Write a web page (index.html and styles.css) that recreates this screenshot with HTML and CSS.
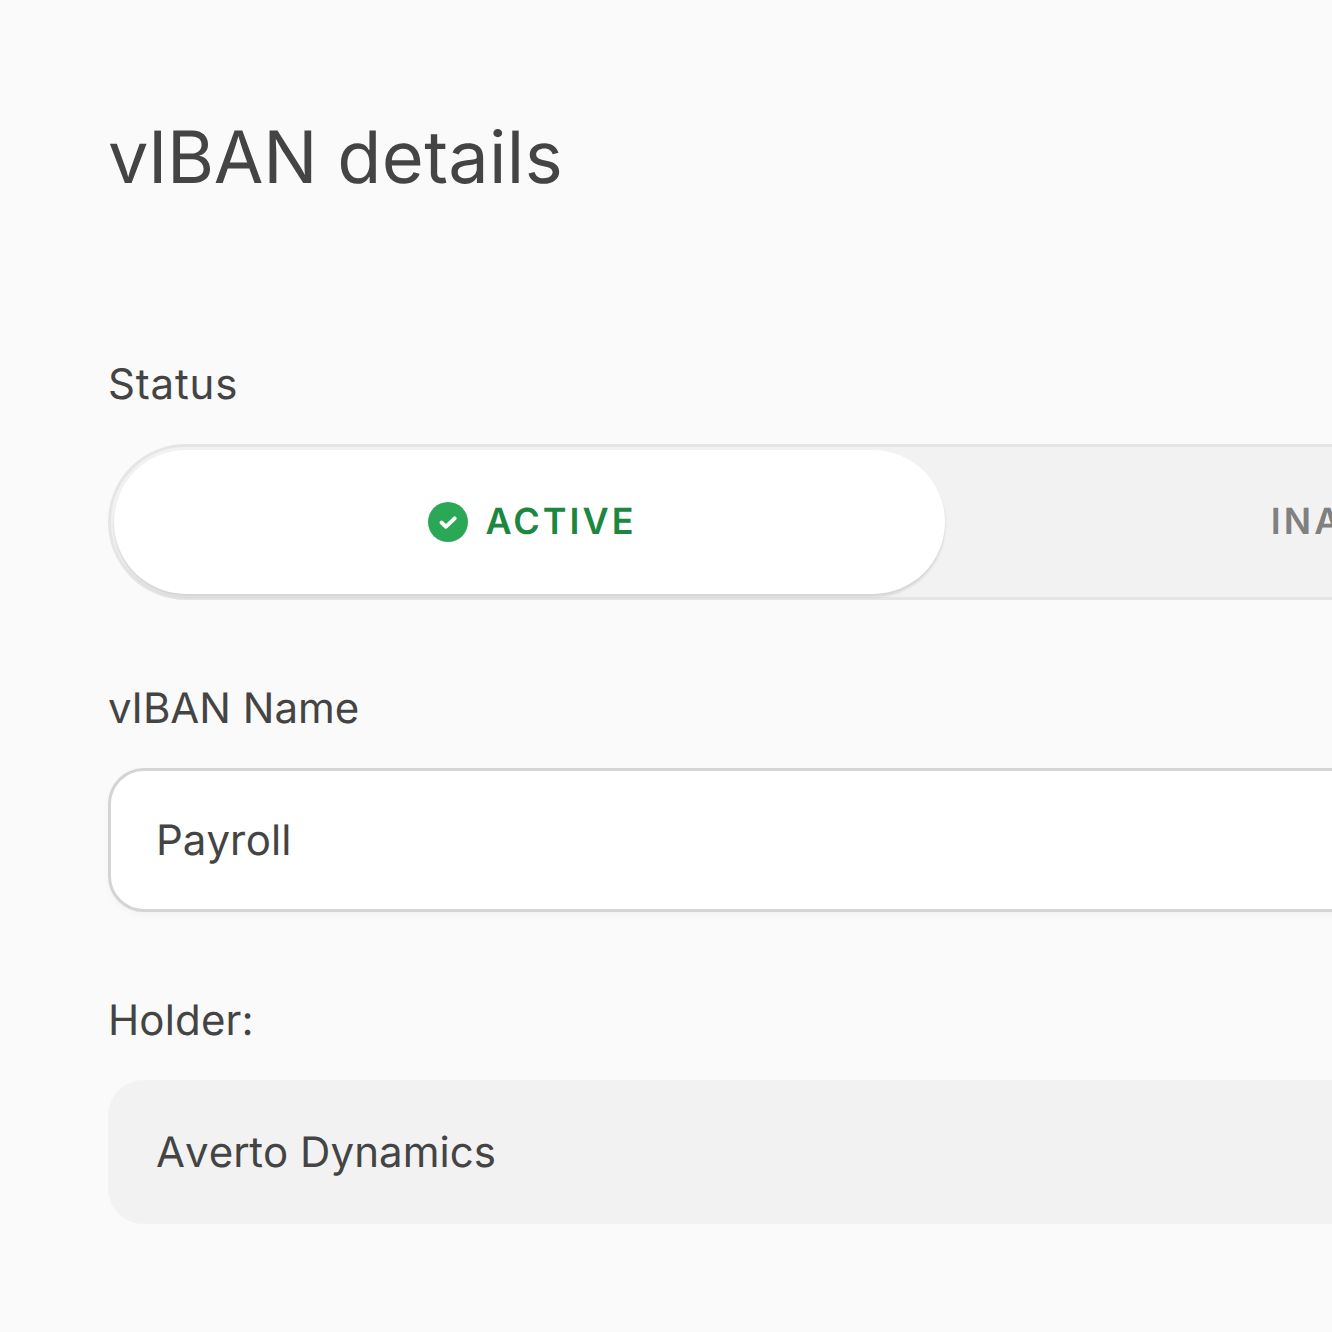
FILE: index.html
```html
<!DOCTYPE html>
<html lang="en">
<head>
<meta charset="utf-8">
<title>vIBAN details</title>
<link rel="stylesheet" href="styles.css">
</head>
<body>
<main class="page">
  <h1 class="title"><span class="title-lead">vIBAN</span> <span class="title-tail">details</span></h1>
  <section class="field field-status">
    <div class="label">Status</div>
    <div class="segmented">
      <div class="segment segment-active">
        <svg class="check" viewBox="0 0 40 40" aria-hidden="true">
          <circle cx="20" cy="20" r="20" fill="#2aa855"/>
          <path d="M13.5 20.5l4.5 4.2 8.7-8.4" fill="none" stroke="#fff" stroke-width="3.9" stroke-linecap="round" stroke-linejoin="round"/>
        </svg>
        <span class="segment-text">ACTIVE</span>
      </div>
      <div class="segment segment-inactive"><span class="segment-text">INACTIVE</span></div>
    </div>
  </section>
  <section class="field field-name">
    <div class="label">vIBAN Name</div>
    <div class="input">Payroll</div>
  </section>
  <section class="field field-holder">
    <div class="label">Holder:</div>
    <div class="input input-readonly">Averto Dynamics</div>
  </section>
</main>
</body>
</html>
```
FILE: styles.css
```css
* { box-sizing: border-box; }
html, body { margin: 0; height: 100%; }
body {
  background: #fafafa;
  overflow: hidden;
  font-family: Inter, "Noto Sans", sans-serif;
  color: #444;
  text-rendering: geometricPrecision;
  font-kerning: none;
}
.page {
  width: 1797px;
  padding: 110px 0 0 108px;
}
.title {
  margin: 0;
  font-size: 72px;
  line-height: 96px;
  font-weight: 400;
}
.title-lead { letter-spacing: -0.35px; }
.title-tail { letter-spacing: 0.4px; }
.field-status { margin-top: 148px; }
.field-name { margin-top: 78px; }
.field-holder { margin-top: 78px; }
.label {
  font-size: 42px;
  line-height: 62px;
  margin-bottom: 28px;
  font-weight: 400;
}
.field-status .label { letter-spacing: 0.9px; }
.field-holder .label { letter-spacing: 0.15px; }
.segmented {
  display: grid;
  grid-template-columns: 831px 1fr;
  height: 156px;
  padding: 3px;
  border: 3px solid #e5e5e5;
  border-radius: 78px;
  background: #f2f2f2;
}
.segment {
  display: flex;
  align-items: center;
  justify-content: center;
  gap: 17px;
  font-size: 36px;
  font-weight: 600;
  letter-spacing: 3px;
  font-kerning: normal;
  border-radius: 72px;
}
.segment-text { margin-top: -2px; }
.segment-active {
  background: #fff;
  color: #1b873f;
  box-shadow: 0 3px 3px rgba(0, 0, 0, 0.12);
  padding-left: 6px;
}
.segment-inactive { color: #808080; }
.check { width: 40px; height: 40px; flex: none; }
.input {
  height: 144px;
  display: flex;
  align-items: center;
  padding: 0 45px;
  font-size: 42px;
  background: #fff;
  border: 3px solid #d4d4d4;
  border-radius: 36px;
  box-shadow: 0 3px 6px rgba(0, 0, 0, 0.03);
}
.input-readonly {
  background: #f2f2f2;
  border-color: #f2f2f2;
  box-shadow: none;
  letter-spacing: 0.07px;
}
```
